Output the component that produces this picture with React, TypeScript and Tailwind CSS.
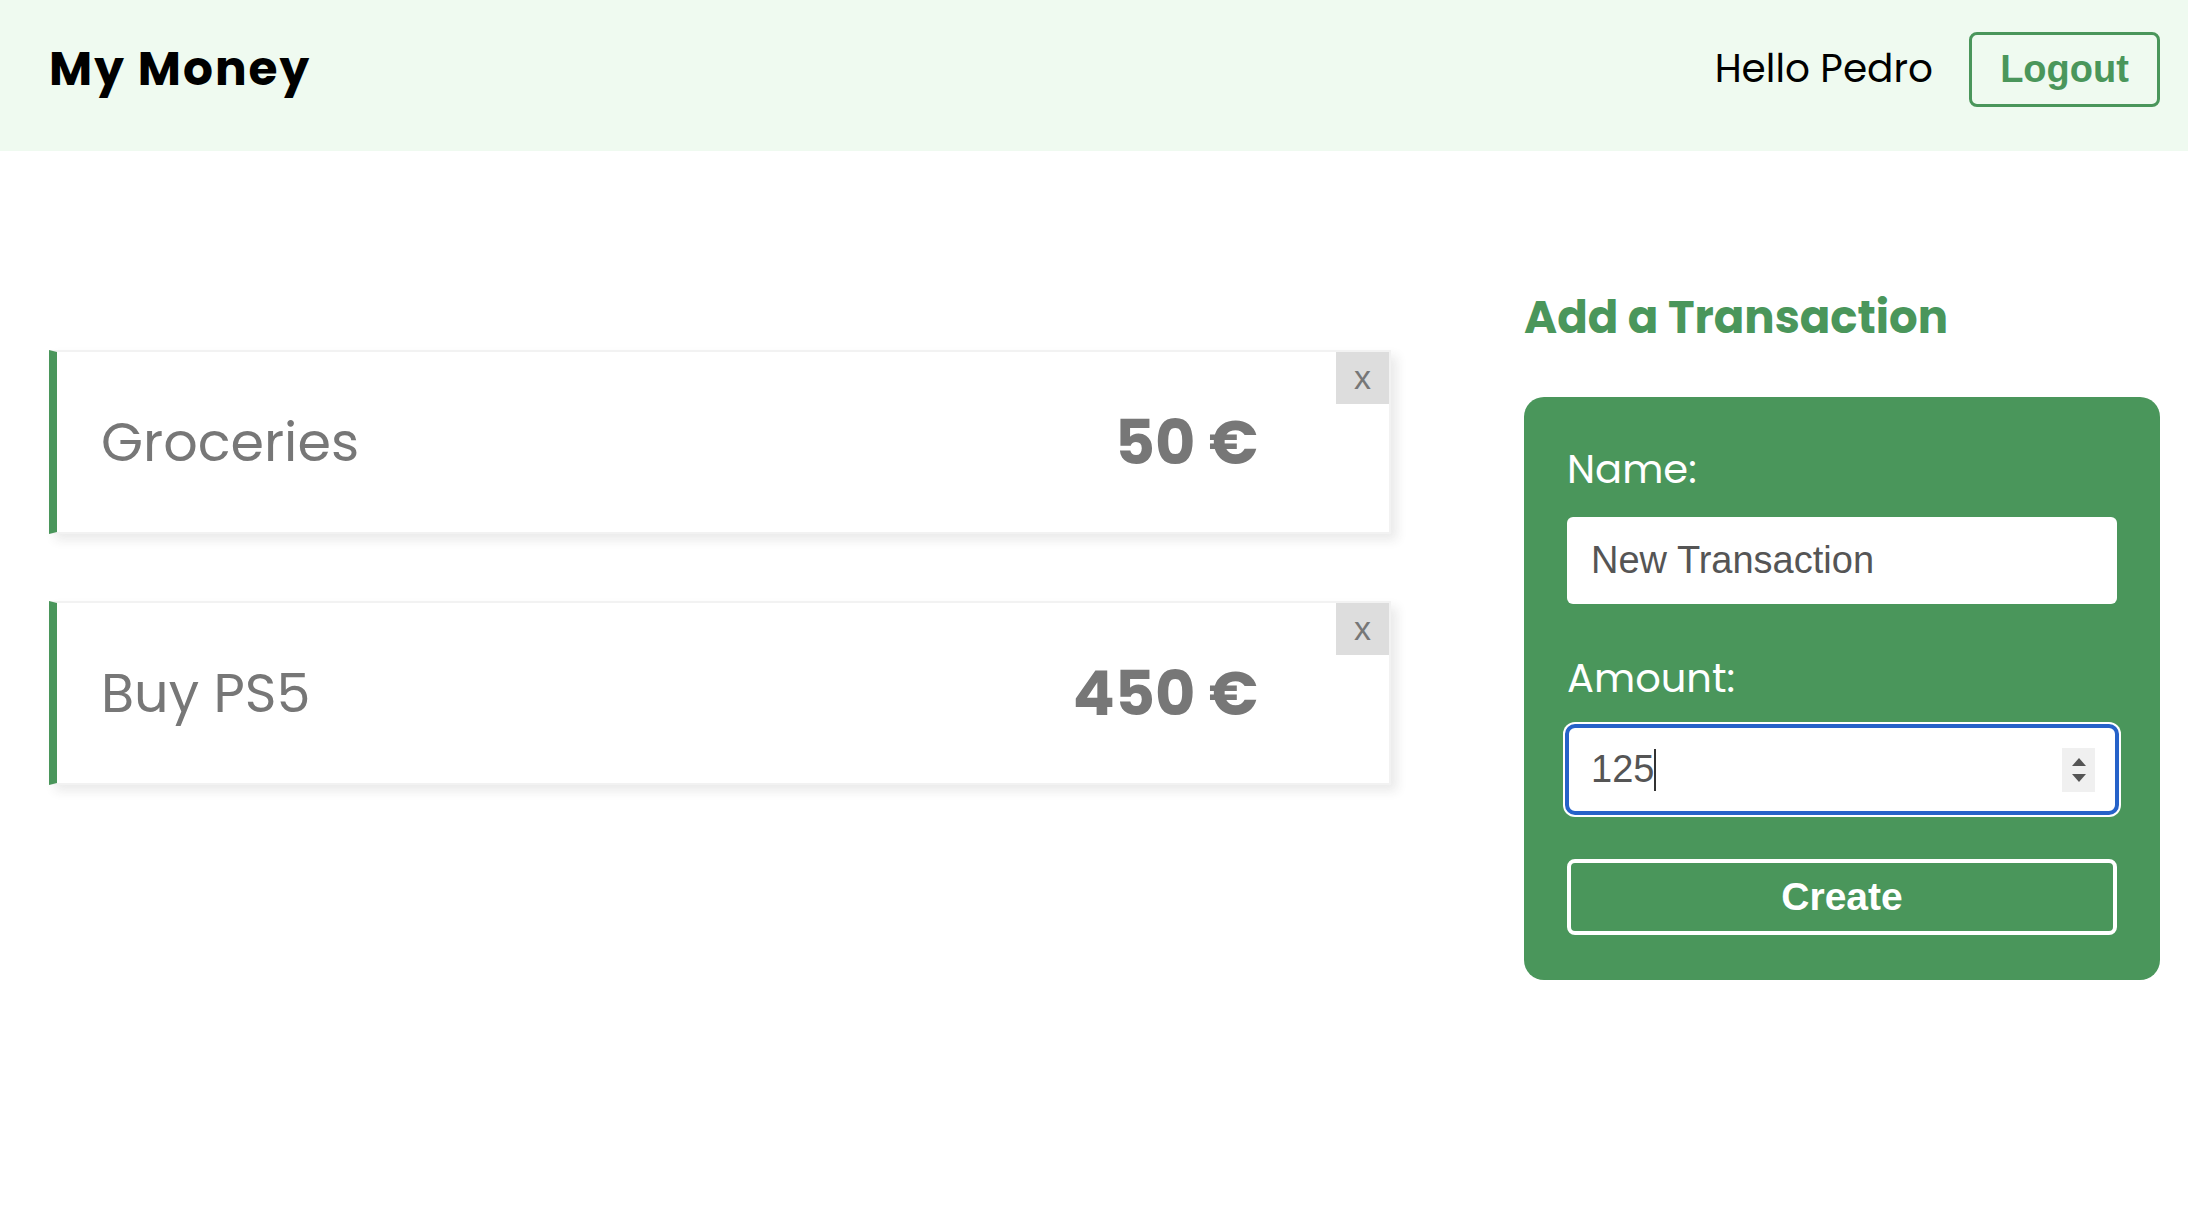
import React from "react";

const transactions = [
  { id: 1, name: "Groceries", amount: 50 },
  { id: 2, name: "Buy PS5", amount: 450 },
];

const TransactionItem = ({ name, amount }) => {
  return (
    <li className="relative flex items-center h-[184px] pl-[44px] pr-[40px] bg-white border-2 border-[#f2f2f2] border-l-[8px] border-l-[#4a965b] shadow-[6px_6px_10px_rgba(50,50,50,0.1)]">
      <p className="text-[#777] text-[54px] font-['Poppins','Inter',sans-serif]">{name}</p>
      <p className="ml-auto mr-[91px] text-[#777] text-[62px] font-bold font-['Poppins','Inter',sans-serif]">
        {amount} €
      </p>
      <button className="absolute top-0 right-0 flex items-center justify-center w-[53px] h-[52px] bg-[#ddd] text-[#777] text-[34px] leading-none pb-[2px] font-['Liberation_Sans',sans-serif]">
        x
      </button>
    </li>
  );
};

const TransactionForm = () => {
  return (
    <div className="w-[636px]">
      <h3 className="text-[45px] leading-[53px] font-bold text-[#4a965b] mb-[53px] font-['Poppins','Inter',sans-serif]">
        Add a Transaction
      </h3>
      <form className="bg-[#4a965b] rounded-[20px] px-[43px] pt-[48px] pb-[45px]">
        <label className="block text-white text-[40px] leading-[48px] mb-[24px] font-['Poppins','Inter',sans-serif]">
          Name:
        </label>
        <input
          type="text"
          readOnly
          value="New Transaction"
          className="block w-full h-[87px] rounded-[6px] bg-white px-[24px] text-[38px] text-[#555] outline-none font-['Liberation_Sans',sans-serif]"
        />
        <label className="block mt-[50px] text-white text-[40px] leading-[48px] mb-[24px] font-['Poppins','Inter',sans-serif]">
          Amount:
        </label>
        {/* focused number input, caret + spinner drawn by hand */}
        <div className="flex items-center w-full h-[87px] rounded-[8px] bg-white pl-[24px] pr-[22px] outline-4 outline-[#2662c9] outline-offset-[-2px] shadow-[0_0_0_4px_white] text-[38px] text-[#555] font-['Liberation_Sans',sans-serif]">
          <span>125</span>
          <span className="w-[2px] h-[42px] bg-[#333]" />
          <div className="ml-auto flex flex-col items-center justify-center gap-[8px] w-[33px] h-[44px] bg-[#f0f0f0]">
            <span className="w-0 h-0 border-l-[7px] border-r-[7px] border-b-[8px] border-l-transparent border-r-transparent border-b-[#555]" />
            <span className="w-0 h-0 border-l-[7px] border-r-[7px] border-t-[8px] border-l-transparent border-r-transparent border-t-[#555]" />
          </div>
        </div>
        <button
          type="button"
          className="block w-full h-[76px] mt-[46px] border-4 border-white rounded-[8px] text-white text-[39px] font-bold font-['Liberation_Sans',sans-serif]"
        >
          Create
        </button>
      </form>
    </div>
  );
};

export default function App() {
  return (
    <div className="min-h-screen bg-white font-['Poppins','Inter',sans-serif]">
      <nav className="flex items-center h-[151px] pl-[49px] pr-[28px] pb-[12px] bg-[#effaf0]">
        <p className="mr-auto text-[47px] font-bold tracking-[2px] text-black">My Money</p>
        <p className="mr-[36px] text-[39px] text-black">Hello Pedro</p>
        <button className="w-[191px] h-[75px] border-[3px] border-[#4a965b] rounded-[8px] text-[#4a965b] text-[38px] font-bold font-['Liberation_Sans',sans-serif]">
          Logout
        </button>
      </nav>
      <main className="flex pl-[49px] pt-[140px]">
        <ul className="w-[1342px] mt-[59px] flex flex-col gap-[67px]">
          {transactions.map((t) => (
            <TransactionItem key={t.id} name={t.name} amount={t.amount} />
          ))}
        </ul>
        <div className="ml-[133px]">
          <TransactionForm />
        </div>
      </main>
    </div>
  );
}
